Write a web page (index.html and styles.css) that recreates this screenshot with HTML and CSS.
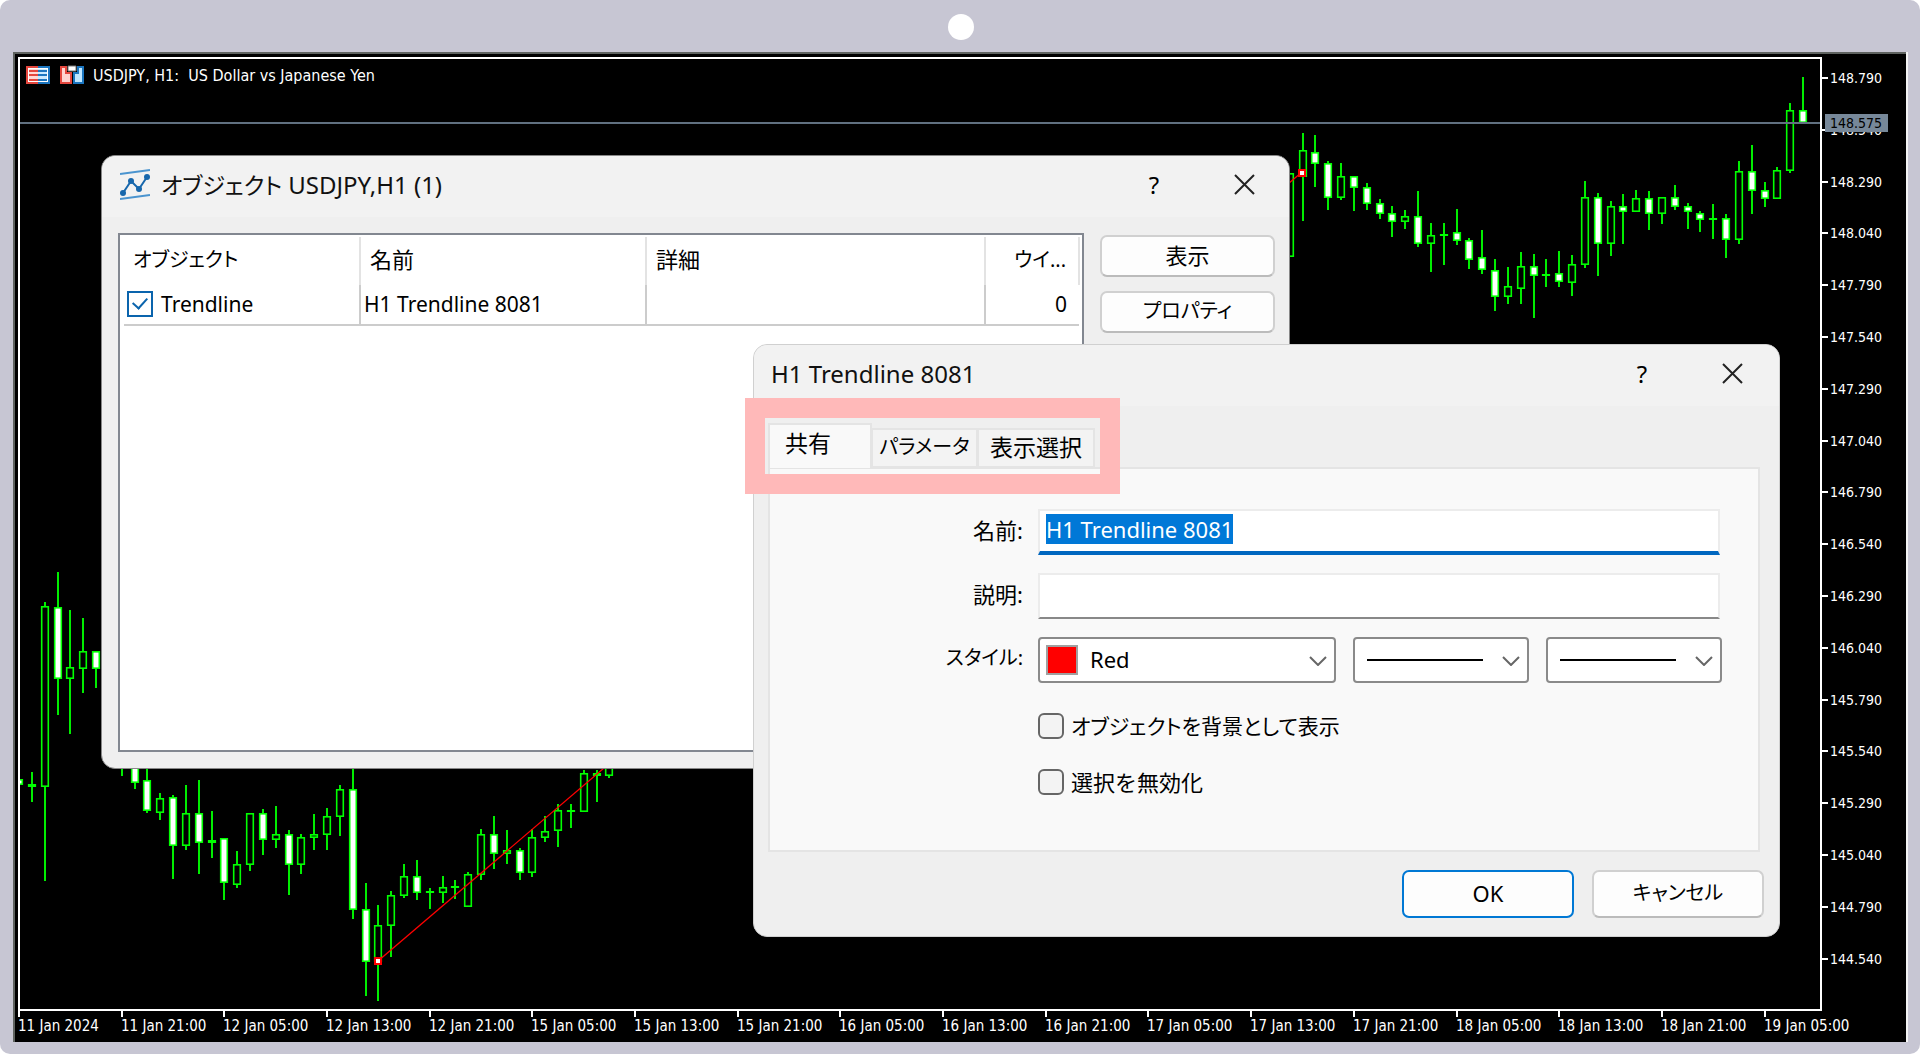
FILE: index.html
```html
<!DOCTYPE html>
<html lang="ja">
<head>
<meta charset="utf-8">
<title>USDJPY, H1</title>
<link rel="stylesheet" href="styles.css">
</head>
<body>
<div class="monitor">
  <div class="bezel"><span class="camera"></span></div>
  <main class="screen">
    <svg class="chart" id="chart" viewBox="13 52 1893 990" role="img" aria-label="USDJPY H1">
      <clipPath id="plot"><path d="M19 58H1821V1010H19Z"/></clipPath>
      <g clip-path="url(#plot)">
        <g id="candles"></g>
        <path class="price-line" d="M20 123H1820"/>
        <path class="trend" d="M378 961L1302 172"/>
        <rect class="anchor" x="375" y="958" width="6" height="6"/>
        <rect class="anchor" x="1299" y="170" width="6" height="6"/>
      </g>
      <path class="frame" d="M19 58H1821V1010H19Z"/>
      <g id="axes"></g>
      <rect class="price-tag" x="1825" y="114" width="63" height="18"/>
      <text class="tag-text" x="1830" y="128">148.575</text>
      <g>
        <path d="M26 66h12v18H26z" fill="#e5473e"/>
        <path d="M38 66h12v18H38z" fill="#1b76c0"/>
        <path d="M28 68h20v14H28z" fill="#fff"/>
        <path d="M29 69h9v12h-9z" fill="#ffd9d6"/>
        <path d="M38 69h9v12h-9z" fill="#c9eaff"/>
        <path d="M29 70h9v2h-9zM29 74h9v2h-9zM29 79h9v2h-9z" fill="#e5473e"/>
        <path d="M38 70h9v2h-9zM38 74h9v2h-9zM38 79h9v2h-9z" fill="#1b76c0"/>
      </g>
      <g stroke-width="2">
        <path d="M61 67h5v6h5v10H61z" fill="#ffd3d0" stroke="#e5473e"/>
        <path d="M83 67h-5v6h-4v10h9z" fill="#bfe6ff" stroke="#1b76c0"/>
        <path d="M68 66h8v5h-8z" fill="#fff" stroke="#777" stroke-width="1"/>
      </g>
      <text class="chart-text heading" x="93" y="81" xml:space="preserve">USDJPY, H1:  US Dollar vs Japanese Yen</text>
    </svg>

    <section class="window objects" aria-labelledby="objects-title">
      <header class="titlebar">
        <svg class="app-icon" viewBox="0 0 30 32" aria-hidden="true">
          <path d="M0 5L30 1M0 30L30 26" stroke="#4a94cf" stroke-width="2"/>
          <path d="M3 24L11 12L19 20L27 8" fill="none" stroke="#1767ac" stroke-width="2"/>
          <g fill="#1767ac"><circle cx="3" cy="24" r="3"/><circle cx="11" cy="12" r="3"/><circle cx="19" cy="20" r="3"/><circle cx="27" cy="8" r="3"/></g>
        </svg>
        <h1 class="title" id="objects-title"><span class="kana">オブジェクト</span> USDJPY,H1 (1)</h1>
        <button class="tool help" type="button">?</button>
        <button class="tool" type="button" aria-label="閉じる"><svg class="close" viewBox="0 0 21 21"><path d="M1 1L20 20M20 1L1 20"/></svg></button>
      </header>
      <div class="objects-body">
        <div class="list">
          <table class="grid">
            <colgroup><col class="c-object"><col class="c-name"><col><col class="c-window"></colgroup>
            <thead><tr><th><span class="kana">オブジェクト</span></th><th>名前</th><th>詳細</th><th class="num"><span class="kana">ウイ...</span></th></tr></thead>
            <tbody><tr>
              <td><label class="check"><input class="box" type="checkbox" checked>Trendline</label></td>
              <td>H1 Trendline 8081</td><td></td><td class="num">0</td>
            </tr></tbody>
          </table>
        </div>
        <div class="side">
          <button class="btn" type="button">表示</button>
          <button class="btn kana" type="button">プロパティ</button>
        </div>
      </div>
    </section>

    <section class="window props" aria-labelledby="props-title">
      <header class="titlebar">
        <h2 class="title" id="props-title">H1 Trendline 8081</h2>
        <button class="tool help" type="button">?</button>
        <button class="tool" type="button" aria-label="閉じる"><svg class="close" viewBox="0 0 21 21"><path d="M1 1L20 20M20 1L1 20"/></svg></button>
      </header>
      <form class="props-body">
        <div class="tabs" role="tablist">
          <button class="tab active" type="button" role="tab" aria-selected="true">共有</button>
          <button class="tab kana" type="button" role="tab">パラメータ</button>
          <button class="tab" type="button" role="tab">表示選択</button>
        </div>
        <div class="panel">
          <label class="label" for="name">名前:</label>
          <input class="field focused" id="name" value="H1 Trendline 8081">
          <label class="label" for="desc">説明:</label>
          <input class="field" id="desc">
          <label class="label kana" for="color">スタイル:</label>
          <div class="selects">
            <div class="pick color-pick">
              <span class="swatch"></span>
              <select class="select" id="color"><option>Red</option></select>
              <svg class="chevron" viewBox="0 0 18 10"><path d="M1 1L9 9L17 1"/></svg>
            </div>
            <div class="pick">
              <span class="stroke"></span>
              <select class="select" aria-label="線種"><option></option></select>
              <svg class="chevron" viewBox="0 0 18 10"><path d="M1 1L9 9L17 1"/></svg>
            </div>
            <div class="pick">
              <span class="stroke"></span>
              <select class="select" aria-label="太さ"><option></option></select>
              <svg class="chevron" viewBox="0 0 18 10"><path d="M1 1L9 9L17 1"/></svg>
            </div>
          </div>
          <label class="check option kana"><input class="box" type="checkbox">オブジェクトを背景として表示</label>
          <label class="check option"><input class="box" type="checkbox">選択を無効化</label>
        </div>
        <div class="actions">
          <button class="btn primary" type="button">OK</button>
          <button class="btn kana" type="button">キャンセル</button>
        </div>
      </form>
      <div class="highlight"></div>
    </section>
  </main>
</div>
<script src="chart.js"></script>
</body>
</html>
```

FILE: styles.css
```css
* { box-sizing: border-box; }
body {
  margin: 0;
  background: #fff;
  color: #000;
  font: 22px/28px "Noto Sans", "Noto Sans CJK JP", sans-serif;
}
button, input, select { font: inherit; color: inherit; }
.kana { font-size: 20px; font-feature-settings: "palt"; }

.monitor {
  min-height: 100vh;
  padding: 0 12px 12px 13px;
  border-radius: 10px;
  background: #c7c6d3;
}
.bezel { height: 52px; display: flex; justify-content: center; align-items: center; padding-top: 2px; }
.camera { width: 26px; height: 26px; border-radius: 50%; background: #fff; }
.screen {
  position: relative;
  background: #000;
  border-right: 2px solid #f4f4f4;
}

.chart { display: block; width: 100%; box-shadow: inset 2px 2px #5f6360; }
.frame { fill: none; stroke: #fff; stroke-width: 2; }
.tick { stroke: #fff; stroke-width: 2; }
.chart-text, .tag-text { font: 14px "DejaVu Sans Condensed", "DejaVu Sans", sans-serif; fill: #fff; }
.heading { font-size: 16px; }
.time { font-size: 15px; }
.tag-text { fill: #000; }
.price-line { stroke: #607080; stroke-width: 2; }
.price-tag { fill: #778899; }
.trend { stroke: #f00; stroke-width: 1.3; }
.anchor { fill: #fff; stroke: #f00; stroke-width: 2; }
.wick { stroke: #0e0; stroke-width: 2; }
.body { stroke: #0f0; stroke-width: 1.6; fill: #000; }
.body.down { fill: #fff; }

.window {
  position: absolute;
  display: flex;
  flex-direction: column;
  border: 1px solid #d0d0d0;
  border-radius: 14px;
  background: #efefef;
}
.objects { left: 88px; top: 103px; width: 1189px; height: 614px; border-color: #888; }
.props { left: 740px; top: 292px; width: 1027px; height: 593px; }
.titlebar {
  display: flex;
  align-items: center;
  height: 61px;
  padding: 0 14px 4px 18px;
  border-radius: 14px 14px 0 0;
  background: #f2f2f2;
}
.app-icon { width: 30px; height: 32px; margin-right: 11px; }
.title { margin: 0; flex: 1; font-size: 24px; line-height: 32px; font-weight: 400; color: #111; }
.title .kana { font-size: 23px; }
.tool {
  width: 62px;
  height: 40px;
  margin-left: 28px;
  padding: 0;
  border: 0;
  background: none;
}
.help { font-size: 24px; }
.close { width: 21px; height: 21px; display: block; margin: auto; fill: none; stroke: #222; stroke-width: 2; }

.objects-body { flex: 1; display: flex; gap: 16px; padding: 16px 14px 16px 16px; }
.list { flex: 1; padding: 2px 2px 2px 4px; border: 2px solid #828790; background: #fff; }
.grid { width: 100%; border-collapse: collapse; table-layout: fixed; }
.grid th { height: 48px; padding: 0 9px 4px; text-align: left; font-weight: 400; border-right: 2px solid #e3e3e3; }
.grid td { height: 40px; padding: 0 3px 2px; font-size: 21px; border-right: 2px solid #ccc; border-bottom: 2px solid #ccc; }
.grid td:last-child { border-right: 0; }
.grid .num { text-align: right; padding-right: 12px; }
.c-object { width: 236px; }
.c-name { width: 286px; }
.c-window { width: 94px; }
.side { width: 175px; display: flex; flex-direction: column; gap: 14px; padding-top: 2px; }
.btn {
  height: 42px;
  padding: 0 0 2px;
  border: 2px solid #d0d0d0;
  border-bottom-color: #bbb;
  border-radius: 7px;
  background: #fdfdfd;
}

.check { display: flex; align-items: center; gap: 8px; }
.box {
  appearance: none;
  width: 26px;
  height: 26px;
  margin: 0;
  border: 2px solid #666;
  border-radius: 6px;
  background: #f3f3f3;
}
.box:checked {
  border-color: #0a64ad;
  border-radius: 0;
  background: #fff;
  display: grid;
  place-items: center;
}
.box:checked::after {
  content: "";
  width: 12px;
  height: 7px;
  margin-bottom: 4px;
  border: solid #0a64ad;
  border-width: 0 0 2px 2px;
  rotate: -48deg;
}

.props .titlebar { padding-left: 17px; padding-right: 16px; }
.props-body { flex: 1; display: flex; flex-direction: column; padding: 17px 15px 18px 14px; }
.tabs { display: flex; align-items: flex-end; height: 44px; }
.tab { height: 40px; padding: 0 0 2px; border: 2px solid #e4e4e4; background: #f3f3f3; width: 107px; margin-bottom: -1px; margin-right: -1px; font-size: 23px; }
.tab.kana { font-size: 20px; }
.tab:last-child { width: 118px; }
.tab.active { width: 104px; height: 45px; border-bottom: 0; background: #f9f9f9; padding: 0 24px 8px 0; position: relative; }
.panel {
  flex: 1;
  display: grid;
  grid-template-columns: 253px 1fr;
  grid-template-rows: 46px 46px 46px 38px 38px;
  column-gap: 15px;
  row-gap: 18px;
  align-items: center;
  margin-right: 4px;
  padding: 40px 36px 0 0;
  border: 2px solid #e4e4e4;
  background: #f9f9f9;
}
.label { text-align: right; padding-bottom: 4px; }
.field {
  width: calc(100% - 2px);
  height: 46px;
  padding: 0 6px 4px;
  border: 2px solid #ececec;
  border-bottom-color: #888;
  background: #fff;
  outline: 0;
}
.focused { border-bottom: 4px solid #0067c0; }
.field::selection { background: #0078d7; color: #fff; }
.selects { display: grid; grid-template-columns: 298px 1fr 1fr; column-gap: 17px; }
.pick { position: relative; height: 46px; }
.select {
  appearance: none;
  width: 100%;
  height: 46px;
  padding: 0 40px 2px 12px;
  border: 2px solid #8a8a8a;
  border-radius: 4px;
  background: #fff;
}
.color-pick .select { padding-left: 50px; }
.swatch { position: absolute; left: 8px; top: 8px; width: 32px; height: 30px; border: 2px solid #a0a0a0; background: #f00; }
.stroke { position: absolute; left: 14px; top: 22px; right: 46px; height: 2px; background: #000; }
.chevron { position: absolute; right: 9px; top: 19px; width: 18px; height: 10px; fill: none; stroke: #666; stroke-width: 2; }
.option { grid-column: 2; gap: 7px; height: 26px; align-self: end; }
.option.kana { font-size: 21px; }
.actions { display: flex; justify-content: flex-end; gap: 18px; margin-top: 18px; }
.actions .btn { width: 172px; height: 48px; }
.primary { border-color: #0078d4; }
.highlight { position: absolute; left: -9px; top: 53px; width: 375px; height: 96px; border: 20px solid #ffb9b9; pointer-events: none; }
```

FILE: chart.js
```js
const NS = "http://www.w3.org/2000/svg";
const STEP = 12.835;
const LEFT = 19;

// Each candle: high, body top, body bottom, low, kind (1 = falling, 0 = rising).
const early = [
  [779,779,784,784,1],[772,784,786,801,0],[602,606,786,880,0],[572,607,678,714,1],[610,667,678,733,0],
  [618,651,668,692,0],[651,651,668,687,1],[660,680,700,720,0],[700,720,740,775,0],[740,750,782,788,1],
  [760,780,810,812,1],[793,798,812,819,0],[795,797,845,878,1],[785,813,845,849,0],[780,813,842,873,1],
  [811,840,842,857,0],[838,838,882,899,1],[851,864,884,887,0],[813,813,864,870,0],[809,813,839,854,1],
  [806,834,839,847,0],[830,834,864,894,1],[834,837,864,873,0],[814,834,837,849,0],[808,816,834,849,0],
  [785,789,816,835,0],[760,789,909,918,1],[883,909,961,995,1],[905,925,961,1000,0],[891,895,925,956,0],
  [864,876,895,897,0],[860,876,892,899,1],[888,891,892,908,0],[876,887,892,902,0],[880,886,887,898,0],
  [872,874,906,906,0],[829,834,874,879,0],[816,834,853,868,1],[830,850,853,863,0],[848,850,872,879,1],
  [829,837,872,876,0],[816,831,837,841,0],[804,810,830,846,0],[804,810,811,827,0],[770,773,811,811,0],
  [770,773,775,801,0],[760,765,775,777,0]
];
const late = [
  [173,173,256,256,0],[133,150,176,220,0],[135,152,163,186,1],[161,163,197,209,1],[163,176,197,199,0],
  [176,176,187,210,1],[183,187,203,209,1],[199,203,213,218,1],[206,213,221,236,1],[210,216,221,228,0],
  [191,216,243,246,1],[223,235,243,271,0],[223,234,235,264,0],[209,232,240,244,1],[238,240,259,268,1],
  [230,257,269,273,1],[259,270,296,310,1],[267,286,296,303,0],[252,266,288,303,0],[254,266,275,317,1],
  [259,274,275,286,0],[251,273,281,286,1],[255,264,282,295,0],[181,197,264,267,0],[193,197,243,275,1],
  [201,206,243,255,0],[194,206,211,243,1],[190,198,211,211,0],[191,198,213,229,1],[197,197,213,223,0],
  [185,197,206,209,1],[203,206,211,228,1],[211,213,219,231,1],[204,218,219,238,0],[214,218,239,257,1],
  [161,171,239,243,0],[145,171,190,213,1],[182,190,198,206,1],[167,170,198,198,0],[103,110,170,172,0],
  [77,110,122,122,1]
];

function add(parent, name, attrs, text) {
  const el = document.createElementNS(NS, name);
  for (const key in attrs) el.setAttribute(key, attrs[key]);
  if (text) el.textContent = text;
  parent.appendChild(el);
}

const candles = document.getElementById("candles");
function draw(list, first) {
  list.forEach(([high, top, bottom, low, down], i) => {
    const x = Math.round(LEFT + (first + i) * STEP);
    add(candles, "path", { class: "wick", d: `M${x} ${high}V${low + 1}` });
    add(candles, "rect", {
      class: down ? "body down" : "body",
      x: x - 3.3, y: top + 0.8, width: 6.6, height: Math.max(bottom - top - 0.6, 0.1)
    });
  });
}
draw(early, 0);
draw(late, 99);

const axes = document.getElementById("axes");
for (let i = 0; i < 18; i++) {
  const y = Math.round(78 + i * 51.8);
  add(axes, "path", { class: "tick", d: `M1821 ${y}H1828` });
  add(axes, "text", { class: "chart-text", x: 1830, y: y + 5 }, (148.79 - i * 0.25).toFixed(3));
}

const times = [
  "11 Jan 2024", "11 Jan 21:00", "12 Jan 05:00", "12 Jan 13:00", "12 Jan 21:00", "15 Jan 05:00",
  "15 Jan 13:00", "15 Jan 21:00", "16 Jan 05:00", "16 Jan 13:00", "16 Jan 21:00", "17 Jan 05:00",
  "17 Jan 13:00", "17 Jan 21:00", "18 Jan 05:00", "18 Jan 13:00", "18 Jan 21:00", "19 Jan 05:00"
];
times.forEach((label, i) => {
  const x = Math.round(LEFT + i * 8 * STEP);
  add(axes, "path", { class: "tick", d: `M${x} 1010V1017` });
  add(axes, "text", { class: "chart-text time", x: x - 1, y: 1031 }, label);
});

const nameField = document.getElementById("name");
nameField.focus();
nameField.select();
```
